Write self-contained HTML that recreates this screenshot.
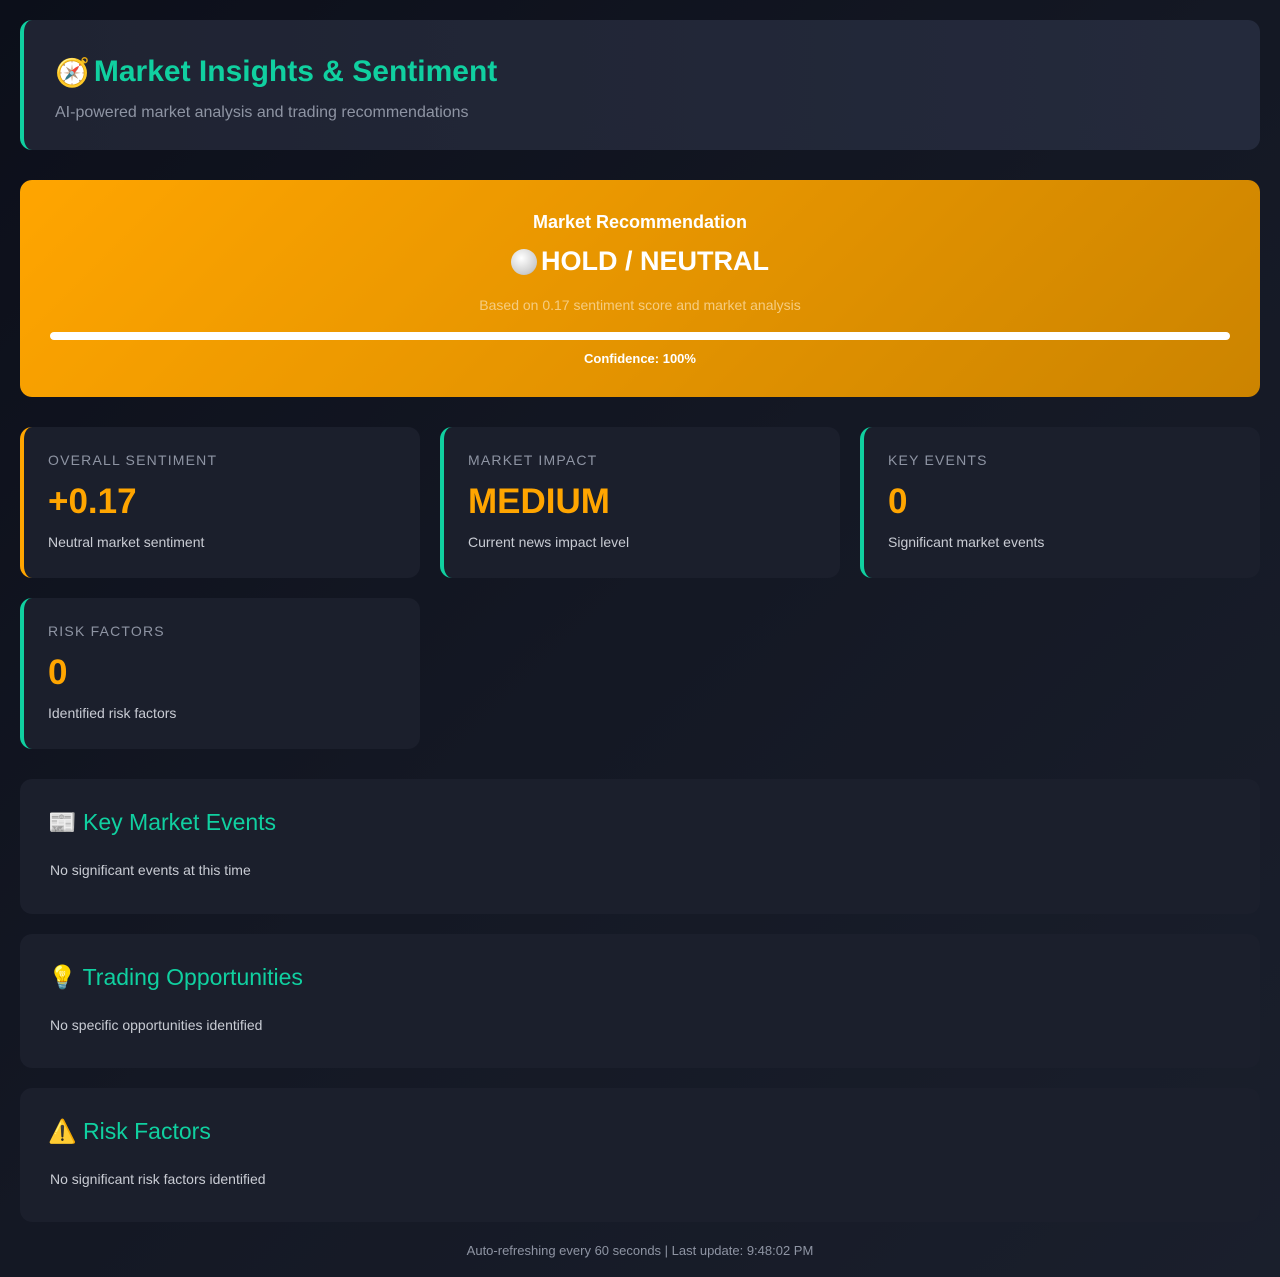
<!DOCTYPE html>
<html><head><meta charset="utf-8"><style>
*{box-sizing:border-box;margin:0;padding:0}
body{width:1280px;height:1277px;background:linear-gradient(135deg,#0c0f1a 0%,#141824 50%,#1a1f2c 100%);font-family:"Liberation Sans","Noto Sans CJK SC",sans-serif;color:#c8cbd3;padding:20px;overflow:hidden}
.hdr{height:130px;border-radius:12px;background:linear-gradient(90deg,#1f2332,#242a3c);border-left:4px solid #10d0a0;padding:35px 31px}
.hdr h1{font-size:30px;font-weight:bold;color:#10d0a0;display:flex;align-items:center;gap:4px}
.hdr p{font-size:16px;color:#8e94a3;margin-top:15px}
.rec{margin-top:30px;height:217px;border-radius:12px;background:linear-gradient(135deg,#ffa500,#cc8400);text-align:center;padding:32px 30px;color:#fff}
.rec h3{font-size:18px;font-weight:bold}
.rec h2{font-size:27px;font-weight:bold;margin-top:13px;display:flex;justify-content:center;align-items:center;gap:4px}
.rec .b{font-size:14px;color:#f6cc7f;margin-top:20px}
.bar{height:8px;background:#fff;border-radius:4px;margin:19px 0 0}
.rec .c{font-size:13px;font-weight:bold;margin-top:11px}
.grid{display:grid;grid-template-columns:repeat(3,400px);gap:20px;margin-top:30px}
.card{height:151px;border-radius:12px;background:#1b1f2c;border-left:4px solid #10d0a0;padding:25px 24px}
.card.o{border-left-color:#ffa500}
.card .l{font-size:14px;letter-spacing:1.2px;color:#8e94a3}
.card .v{font-size:35px;font-weight:bold;color:#ffa500;margin-top:14px}
.card .d{font-size:14px;color:#c8cbd3;margin-top:12px}
.sec{margin-top:30px;height:135px;border-radius:12px;background:#1b1f2c;padding:30px 30px}
.sec+.sec{margin-top:20px;height:134px}
.sec h4{font-size:23px;font-weight:normal;color:#10d0a0;display:flex;align-items:center;gap:4px;margin-left:-2px}
.sec p{font-size:14px;color:#c8cbd3;margin-top:26px}
.ft{text-align:center;font-size:13px;color:#8e94a3;margin-top:21px}
.dot{width:26px;height:26px;border-radius:50%;background:radial-gradient(circle at 40% 35%,#fff,#ccc 70%,#999)}
</style></head><body>
<div class="hdr"><h1><span style="font-size:28px">🧭</span>Market Insights &amp; Sentiment</h1><p>AI-powered market analysis and trading recommendations</p></div>
<div class="rec"><h3>Market Recommendation</h3><h2><span class="dot"></span>HOLD / NEUTRAL</h2><div class="b">Based on 0.17 sentiment score and market analysis</div><div class="bar"></div><div class="c">Confidence: 100%</div></div>
<div class="grid">
<div class="card o"><div class="l">OVERALL SENTIMENT</div><div class="v">+0.17</div><div class="d">Neutral market sentiment</div></div>
<div class="card"><div class="l">MARKET IMPACT</div><div class="v">MEDIUM</div><div class="d">Current news impact level</div></div>
<div class="card"><div class="l">KEY EVENTS</div><div class="v">0</div><div class="d">Significant market events</div></div>
<div class="card"><div class="l">RISK FACTORS</div><div class="v">0</div><div class="d">Identified risk factors</div></div>
</div>
<div class="sec"><h4>📰 Key Market Events</h4><p>No significant events at this time</p></div>
<div class="sec"><h4>💡 Trading Opportunities</h4><p>No specific opportunities identified</p></div>
<div class="sec"><h4>⚠️ Risk Factors</h4><p>No significant risk factors identified</p></div>
<div class="ft">Auto-refreshing every 60 seconds | Last update: 9:48:02 PM</div>
</body></html>
